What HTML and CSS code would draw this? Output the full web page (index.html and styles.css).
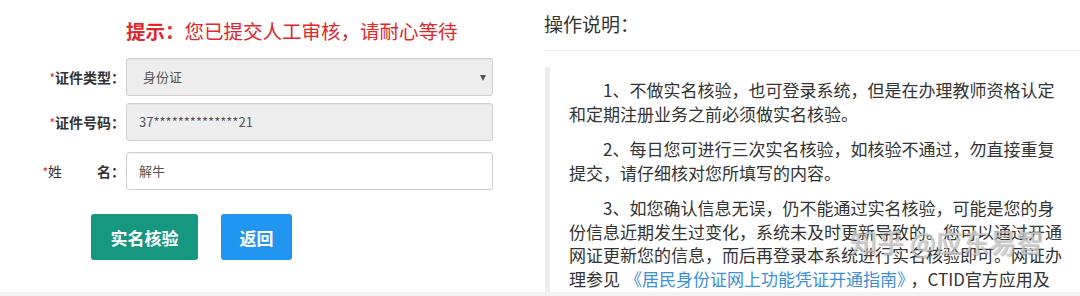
FILE: index.html
```html
<!DOCTYPE html>
<html lang="zh-CN">
<head>
<meta charset="utf-8">
<title>实名核验</title>
<link rel="stylesheet" href="styles.css">
</head>
<body>
<div class="page">
  <div class="left">
    <h2 class="tip"><b>提示：</b>您已提交人工审核，请耐心等待</h2>
    <div class="form">
      <div class="row">
        <label class="lbl"><i>*</i>证件类型：</label>
        <div class="field select">身份证<span class="arrow"></span></div>
      </div>
      <div class="row row2">
        <label class="lbl"><i>*</i>证件号码：</label>
        <div class="field readonly">37**************21</div>
      </div>
      <div class="row row3">
        <label class="lbl"><i>*</i><span class="thin">姓</span><span class="sp"></span>名：</label>
        <div class="field plain">解牛</div>
      </div>
    </div>
    <div class="btns">
      <button class="btn green">实名核验</button>
      <button class="btn blue">返回</button>
    </div>
  </div>
  <div class="right">
    <h3 class="head">操作说明：</h3>
    <div class="quote">
      <p>　　1、不做实名核验，也可登录系统，但是在办理教师资格认定和定期注册业务之前必须做实名核验。</p>
      <p>　　2、每日您可进行三次实名核验，如核验不通过，勿直接重复提交，请仔细核对您所填写的内容。</p>
      <p>　　3、如您确认信息无误，仍不能通过实名核验，可能是您的身份信息近期发生过变化，系统未及时更新导致的。您可以通过开通网证更新您的信息，而后再登录本系统进行实名核验即可。网证办理参见<a class="link">《居民身份证网上功能凭证开通指南》</a>，CTID官方应用及</p>
    </div>
    <div class="mark">知乎 @应东易智</div>
  </div>
</div>
<div class="band"></div>
</body>
</html>
```
FILE: styles.css
```css
html, body {
  margin: 0;
  padding: 0;
}
body {
  width: 1080px;
  height: 296px;
  overflow: hidden;
  background: #f2f2f2;
  font-family: "Noto Sans CJK SC", "Noto Sans", sans-serif;
  color: #333;
}
.page {
  display: flex;
  height: 292px;
  background: #fff;
  overflow: hidden;
}
.left {
  width: 544px;
  flex: none;
}
.tip {
  margin: 17px 0 0 126px;
  font-size: 19.5px;
  line-height: 28px;
  font-weight: normal;
  color: #e3262b;
  white-space: nowrap;
}
.tip b {
  font-weight: bold;
}
.form {
  margin-top: 13px;
}
.row {
  display: flex;
  align-items: center;
  height: 38px;
}
.row2 {
  margin-top: 7px;
}
.row3 {
  margin-top: 11px;
}
.lbl {
  width: 125px;
  text-align: right;
  font-size: 14px;
  font-weight: bold;
  color: #333;
  white-space: nowrap;
  margin-right: 1px;
}
.lbl i {
  font-style: normal;
  font-weight: normal;
  color: #e3262b;
  font-size: 12px;
}
.lbl .thin {
  font-weight: normal;
}
.lbl .sp {
  display: inline-block;
  width: 35px;
}
.field {
  position: relative;
  box-sizing: border-box;
  width: 367px;
  height: 38px;
  border: 1px solid #cfcfcf;
  border-radius: 3px;
  font-size: 13px;
  color: #555;
  line-height: 36px;
  padding-left: 12px;
  box-shadow: inset 0 1px 1px rgba(0,0,0,0.04);
}
.select {
  background: #eee;
  padding-left: 16px;
}
.readonly {
  background: #eee;
}
.plain {
  background: #fff;
}
.arrow {
  position: absolute;
  right: 6px;
  top: 16px;
  width: 0;
  height: 0;
  border-left: 3.5px solid transparent;
  border-right: 3.5px solid transparent;
  border-top: 6px solid #555;
}
.btns {
  display: flex;
  gap: 23px;
  margin: 24px 0 0 91px;
}
.btn {
  height: 46px;
  border: none;
  border-radius: 3px;
  color: #fff;
  font-family: "Noto Sans CJK SC", sans-serif;
  font-size: 17px;
  font-weight: bold;
  padding: 0;
  text-align: center;
}
.green {
  width: 107px;
  background: #16977f;
}
.blue {
  width: 71px;
  background: #2196f0;
}
.right {
  position: relative;
  flex: 1;
}
.head {
  margin: 10px 0 0 0;
  font-size: 19px;
  line-height: 28px;
  font-weight: normal;
  color: #333;
  padding-bottom: 12px;
  border-bottom: 1px solid #eee;
}
.quote {
  margin: 16px 0 0 1px;
  border-left: 5px solid #eee;
  padding: 11px 0 0 19px;
  width: 495px;
  height: 300px;
}
.quote p {
  margin: 0 0 12px 0;
  font-size: 17px;
  line-height: 23.5px;
  color: #333;
}
.link {
  color: #3b8fdc;
  margin: 0 5px 0 5px;
}
.mark {
  position: absolute;
  left: 306px;
  top: 224px;
  font-size: 27px;
  line-height: 36px;
  color: rgba(255,255,255,0.55);
  text-shadow: 0 0 1px rgba(90,90,90,0.6), 1px 1px 1px rgba(120,120,120,0.4);
  white-space: nowrap;
}
.band {
  height: 4px;
  background: #f2f2f2;
}
```
